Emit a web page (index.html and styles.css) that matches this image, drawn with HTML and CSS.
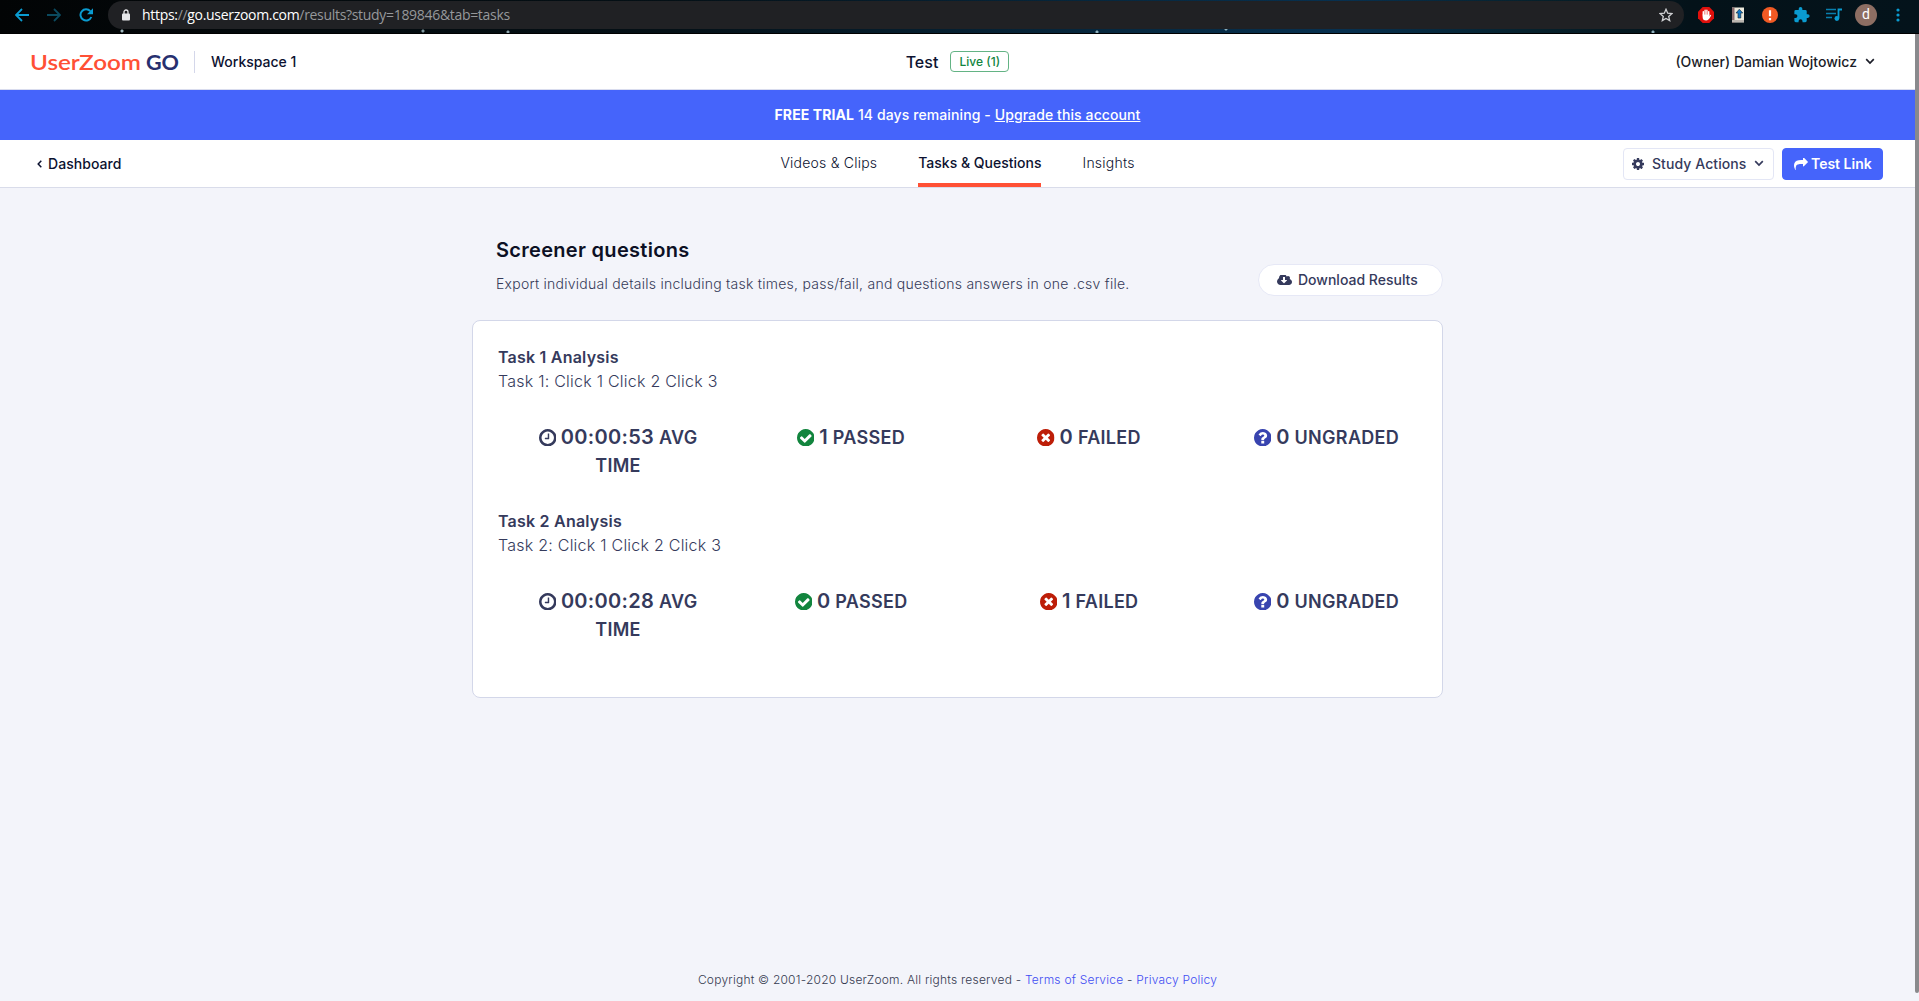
FILE: index.html
```html
<!DOCTYPE html>
<html lang="en">
<head>
<meta charset="utf-8">
<title>UserZoom GO - Tasks &amp; Questions</title>
<link rel="stylesheet" href="styles.css">
</head>
<body>
<svg class="sprite" aria-hidden="true">
  <symbol id="clock" viewBox="128 128 1536 1536"><path d="M1024 544v448q0 14-9 23t-23 9h-320q-14 0-23-9t-9-23v-64q0-14 9-23t23-9h224v-352q0-14 9-23t23-9h64q14 0 23 9t9 23zm416 352q0-148-73-273t-198-198-273-73-273 73-198 198-73 273 73 273 198 198 273 73 273-73 198-198 73-273zm224 0q0 209-103 385.5t-279.5 279.5-385.5 103-385.5-103-279.5-279.5-103-385.5 103-385.5 279.5-279.5 385.5-103 385.5 103 279.5 279.5 103 385.5z"/></symbol>
  <symbol id="check" viewBox="128 128 1536 1536"><path d="M1412 734q0-28-18-46l-91-90q-19-19-45-19t-45 19l-408 407-226-226q-19-19-45-19t-45 19l-91 90q-18 18-18 46 0 27 18 45l362 362q19 19 45 19 27 0 46-19l543-543q18-18 18-45zm252 162q0 209-103 385.5t-279.5 279.5-385.5 103-385.5-103-279.5-279.5-103-385.5 103-385.5 279.5-279.5 385.5-103 385.5 103 279.5 279.5 103 385.5z"/></symbol>
  <symbol id="times" viewBox="128 128 1536 1536"><path d="M1277 1122q0-26-19-45l-181-181 181-181q19-19 19-45 0-27-19-46l-90-90q-19-18-46-18-26 0-45 18l-181 181-181-181q-19-18-45-18-27 0-46 18l-90 90q-19 19-19 46 0 26 19 45l181 181-181 181q-19 19-19 45 0 27 19 46l90 90q19 18 46 18 26 0 45-18l181-181 181 181q19 18 45 18 27 0 46-18l90-90q19-19 19-46zm387-226q0 209-103 385.5t-279.5 279.5-385.5 103-385.5-103-279.5-279.5-103-385.5 103-385.5 279.5-279.5 385.5-103 385.5 103 279.5 279.5 103 385.5z"/></symbol>
  <symbol id="question" viewBox="128 128 1536 1536"><path d="M1024 1376v-192q0-14-9-23t-23-9h-192q-14 0-23 9t-9 23v192q0 14 9 23t23 9h192q14 0 23-9t9-23zm256-672q0-88-55.5-163t-138.5-116-170-41q-243 0-371 213-15 24 8 42l132 100q7 6 19 6 16 0 25-12 53-68 86-92 34-24 86-24 48 0 85.5 26t37.5 59q0 38-20 61t-68 45q-63 28-115.5 86.5t-52.5 125.5v36q0 14 9 23t23 9h192q14 0 23-9t9-23q0-19 21.5-49.5t54.5-49.5q32-18 49-28.5t46-35 44.5-48 28-60.5 12.5-81zm384 192q0 209-103 385.5t-279.5 279.5-385.5 103-385.5-103-279.5-279.5-103-385.5 103-385.5 279.5-279.5 385.5-103 385.5 103 279.5 279.5 103 385.5z"/></symbol>
  <symbol id="chevron" viewBox="0 0 10 7"><path d="M1.2 1.2 5 5l3.800-3.800" fill="none" stroke="currentColor" stroke-width="1.700"/></symbol>
</svg>

<div class="browser">
  <svg class="b-icon back" viewBox="0 0 14 14"><path d="M14 7H1.500M7 1 1 7l6 6" fill="none" stroke="#0a9bd0" stroke-width="1.800"/></svg>
  <svg class="b-icon forward" viewBox="0 0 14 14"><path d="M0 7h12.500M7 1l6 6-6 6" fill="none" stroke="#0b4a5f" stroke-width="1.800"/></svg>
  <svg class="b-icon reload" viewBox="0 0 14 14"><path d="M11.300 3.200A5.600 5.600 0 1 0 12.300 9" fill="none" stroke="#0a9bd0" stroke-width="2"/><path d="M14 .3v6H8z" fill="#0a9bd0"/></svg>
  <div class="omnibox">
    <svg class="lock" viewBox="0 0 8 12"><path d="M2 5V3a2 2 0 0 1 4 0v2" fill="none" stroke="#e6e7e9" stroke-width="1.300"/><rect y="4.500" width="8" height="7" rx="1" fill="#e6e7e9"/></svg>
    <span class="url"><b>https:</b>//<b>go.userzoom.com</b>/results?study=189846&amp;tab=tasks</span>
    <svg class="star" viewBox="0 0 14 14"><path d="m7 1.300 1.700 3.900 4.200.4-3.200 2.800 1 4.200L7 10.400l-3.700 2.200 1-4.200L1.100 5.600l4.200-.4z" fill="none" stroke="#cfd0d2" stroke-width="1.300"/></svg>
  </div>
  <div class="extensions">
    <svg viewBox="0 0 16 16"><path d="M4.700 0h6.600L16 4.700v6.600L11.300 16H4.700L0 11.300V4.700z" fill="#e0100c"/><path d="M5.300 8V4.600M7.100 7.500V3.200M8.900 7.500V3.200M10.700 8V4.600M10.600 11.500l1.900-3" stroke="#fff" stroke-width="1.400" stroke-linecap="round"/><path d="M4.600 7.500h6.800v2.500q-.8 3.500-3.200 3.500-3.600 0-3.600-3.500z" fill="#fff"/></svg>
    <svg viewBox="0 0 16 16"><path d="M2 .5h12v15H2z" fill="#ece9dc"/><path d="M2 .5h2.500v15H2z" fill="#8b6b6d"/><path d="M2 13h12v2H2z" fill="#bbb6b0"/><path d="M9.300 2.200 12.800 6h-2v5H8V6H6z" fill="#1679c5" stroke="#123" stroke-width=".6"/></svg>
    <svg viewBox="0 0 16 16"><circle cx="8" cy="8" r="8" fill="#f15a24"/><path d="M8 3.200v6M8 11v2.200" stroke="#fff" stroke-width="2.200"/></svg>
    <svg viewBox="1.500 1 22 22"><path d="M20.500 11H19V7a2 2 0 0 0-2-2h-4V3.500a2.500 2.500 0 0 0-5 0V5H4a2 2 0 0 0-2 2v3.800h1.500a2.700 2.700 0 0 1 0 5.400H2V20c0 1.100.9 2 2 2h3.800v-1.500a2.700 2.700 0 0 1 5.400 0V22H17a2 2 0 0 0 2-2v-4h1.500a2.500 2.500 0 0 0 0-5z" fill="#0a9bd0"/></svg>
    <svg viewBox="0 0 16 16"><path d="M0 2.500h10M0 6.500h10M0 10.500h6" stroke="#087fae" stroke-width="1.700"/><path d="M12.500 11V2.500H16" fill="none" stroke="#0a9bd0" stroke-width="1.800"/><circle cx="10.900" cy="11.500" r="2.400" fill="#0a9bd0"/></svg>
    <span class="avatar">d</span>
    <svg class="dots" viewBox="0 0 4 14"><g fill="#0a9bd0"><circle cx="2" cy="2" r="1.600"/><circle cx="2" cy="7" r="1.600"/><circle cx="2" cy="12" r="1.600"/></g></svg>
  </div>
</div>

<div class="page">
  <header class="top">
    <div class="brand">
      <svg class="logo" viewBox="0 0 150 24"><text x="-1" y="20" textLength="111" lengthAdjust="spacingAndGlyphs" fill="#ff5035">UserZoom</text><text class="go" x="115" y="20" textLength="33" lengthAdjust="spacingAndGlyphs" fill="#27306f">GO</text></svg>
      <span class="workspace">Workspace 1</span>
    </div>
    <div class="study"><span class="study-name">Test</span><span class="live">Live (1)</span></div>
    <div class="owner"><span>(Owner) Damian Wojtowicz</span><svg class="chev"><use href="#chevron"/></svg></div>
  </header>
  <div class="trial"><span><b>FREE TRIAL</b> 14 days remaining - <a href="#">Upgrade this account</a></span></div>
  <nav class="subnav">
    <a class="dash" href="#"><svg viewBox="0 0 5 8"><path d="M4.300.8 1.200 4l3.100 3.200" fill="none" stroke="currentColor" stroke-width="1.500"/></svg><span>Dashboard</span></a>
    <div class="tabs"><a class="tab" href="#">Videos &amp; Clips</a><a class="tab active" href="#">Tasks &amp; Questions</a><a class="tab" href="#">Insights</a></div>
    <div class="actions">
      <button class="btn study-actions"><svg class="cog" viewBox="128 128 1536 1536"><path fill="currentColor" d="M1152 896q0-106-75-181t-181-75-181 75-75 181 75 181 181 75 181-75 75-181zm512-109v222q0 12-8 23t-20 13l-185 28q-19 54-39 91 35 50 107 138 10 12 10 25t-9 23q-27 37-99 108t-94 71q-12 0-26-9l-138-108q-44 23-91 38-16 136-29 186-7 28-36 28h-222q-14 0-24.500-8.500t-11.500-21.500l-28-184q-49-16-90-37l-141 107q-10 9-25 9-14 0-25-11-126-114-165-168-7-10-7-23 0-12 8-23 15-21 51-66.500t54-70.500q-27-50-41-99l-183-27q-13-2-21-12.500t-8-23.500v-222q0-12 8-23t19-13l186-28q14-46 39-92-40-57-107-138-10-12-10-24 0-10 9-23 26-36 98.500-107.500t94.500-71.500q13 0 26 10l138 107q44-23 91-38 16-136 29-186 7-28 36-28h222q14 0 24.500 8.500t11.500 21.500l28 184q49 16 90 37l142-107q9-9 24-9 13 0 25 10 129 119 165 170 7 8 7 22 0 12-8 23-15 21-51 66.500t-54 70.500q26 50 41 98l183 28q13 2 21 12.500t8 23.500z"/></svg><span>Study Actions</span><svg class="chev"><use href="#chevron"/></svg></button>
      <button class="btn test-link"><svg class="share" viewBox="0 128 1792 1536"><path fill="currentColor" d="M1792 640q0 26-19 45l-512 512q-19 19-45 19t-45-19-19-45v-256h-224q-98 0-175.500 6t-154 21.500-133 42.500-105.500 69.500-80 101-48.500 138.500-17.500 181q0 55 5 123 0 6 2.500 23.500t2.500 26.500q0 15-8.500 25t-23.500 10q-16 0-28-17-7-9-13-22t-13.500-30-10.500-24q-127-285-127-451 0-199 53-333 162-403 875-403h224v-256q0-26 19-45t45-19 45 19l512 512q19 19 19 45z"/></svg><span>Test Link</span></button>
    </div>
  </nav>

  <main class="content">
    <div class="intro">
      <div><h1>Screener questions</h1><p>Export individual details including task times, pass/fail, and questions answers in one .csv file.</p></div>
      <button class="download"><svg viewBox="0 256 1920 1280"><path fill="currentColor" d="M1280 928q0-14-9-23t-23-9h-224v-352q0-13-9.500-22.500t-22.500-9.500h-192q-13 0-22.500 9.500t-9.500 22.500v352h-224q-13 0-22.500 9.500t-9.500 22.500q0 14 9 23l352 352q9 9 23 9t23-9l351-351q10-12 10-24zm640 224q0 159-112.500 271.500t-271.500 112.500h-1088q-185 0-316.500-131.500t-131.500-316.500q0-130 70-240t188-165q-2-30-2-43 0-212 150-362t362-150q156 0 285.500 87t188.500 231q71-62 166-62 106 0 181 75t75 181q0 76-41 138 130 31 213.500 135.500t83.500 238.500z"/></svg><span>Download Results</span></button>
    </div>
    <section class="card">
      <article class="task">
        <h2>Task 1 Analysis</h2>
        <p>Task 1: Click 1 Click 2 Click 3</p>
        <div class="stats">
          <div class="stat avg"><svg class="clock"><use href="#clock"/></svg> <b>00:00:53</b> <span>AVG</span> <span>TIME</span></div>
          <div class="stat"><svg class="passed"><use href="#check"/></svg> <b>1</b> PASSED</div>
          <div class="stat"><svg class="failed"><use href="#times"/></svg> <b>0</b> FAILED</div>
          <div class="stat"><svg class="ungraded"><use href="#question"/></svg> <b>0</b> UNGRADED</div>
        </div>
      </article>
      <article class="task">
        <h2>Task 2 Analysis</h2>
        <p>Task 2: Click 1 Click 2 Click 3</p>
        <div class="stats">
          <div class="stat avg"><svg class="clock"><use href="#clock"/></svg> <b>00:00:28</b> <span>AVG</span> <span>TIME</span></div>
          <div class="stat"><svg class="passed"><use href="#check"/></svg> <b>0</b> PASSED</div>
          <div class="stat"><svg class="failed"><use href="#times"/></svg> <b>1</b> FAILED</div>
          <div class="stat"><svg class="ungraded"><use href="#question"/></svg> <b>0</b> UNGRADED</div>
        </div>
      </article>
    </section>
  </main>
  <footer><span>Copyright © 2001-2020 UserZoom. All rights reserved - <a href="#">Terms of Service</a> - <a href="#">Privacy Policy</a></span></footer>
  <div class="scrollbar"></div>
</div>
</body>
</html>
```
FILE: styles.css
```css
* { box-sizing: border-box; }
body { margin: 0; width: 1919px; height: 1001px; overflow: hidden; display: flex; flex-direction: column; background: #f3f4fa; color: #0c1230; font-family: Inter, sans-serif; font-size: 14px; }
a { color: inherit; text-decoration: none; }
h1, h2, p { margin: 0; }
button { font: inherit; }
svg { flex: none; }
.sprite { position: absolute; width: 0; height: 0; }

.browser { height: 34px; flex: none; display: flex; align-items: flex-start; background: radial-gradient(circle at 122px 31px, #9fb6bd 1px, transparent 2px), radial-gradient(circle at 423px 31px, #7f969d 1px, transparent 2px), radial-gradient(circle at 508px 32px, #8fa6ad 1px, transparent 2px), radial-gradient(circle at 1097px 32px, #8fb0bd 1px, transparent 2px), radial-gradient(circle at 1226px 29px, #8fb0bd 1px, transparent 2px), radial-gradient(circle at 1653px 32px, #8fb0bd 1px, transparent 2px), linear-gradient(90deg, #020405, #041016 35%, #06283f 58%, #07304f 70%, #06212c 80%, #041219 88%, #04131b); border-bottom: 1px solid #000; }
.b-icon { width: 14px; height: 14px; margin-top: 8px; }
.back { margin-left: 15px; }
.forward { margin-left: 18px; }
.reload { margin-left: 18px; }
.omnibox { margin: 1px 0 0 15px; width: 1576px; height: 28px; border-radius: 14px; background: #202124; display: flex; align-items: center; padding: 0 11px 0 14px; }
.lock { width: 8px; height: 12px; }
.url { margin-left: 12px; flex: 1; font: 14px/20px "Open Sans", sans-serif; letter-spacing: -.31px; color: #96989b; }
.url b { font-weight: 400; color: #fff; }
.star { width: 14px; height: 14px; }
.extensions { display: flex; align-items: center; height: 30px; margin-left: 14px; gap: 16px; }
.extensions svg { width: 16px; height: 16px; }
.extensions .dots { width: 4px; height: 14px; margin-left: 3px; }
.avatar { width: 22px; height: 22px; margin-left: -3px; border-radius: 50%; background: #8d6e63; color: #fff; font: 14px/21px Roboto, sans-serif; text-align: center; }

.page { position: relative; flex: 1; display: flex; flex-direction: column; width: 1919px; padding-right: 4px; }
.scrollbar { position: absolute; right: 0; top: 0; width: 4px; height: 959px; background: #89898c; border-radius: 0 0 2px 2px; }
.top, .subnav { display: grid; grid-template-columns: 1fr auto 1fr; align-items: center; background: #fff; }
.top { height: 56px; border-bottom: 1px solid #d9dcee; }
.brand { display: flex; align-items: center; padding-left: 31px; }
.logo { width: 150px; height: 24px; overflow: visible; font: 600 21px Lato, sans-serif; }
.logo .go { font-weight: 700; }
.workspace { margin-left: 13px; padding-left: 16px; border-left: 1px solid #d4d7ea; line-height: 22px; font-weight: 500; font-size: 14px; }
.study { display: flex; align-items: center; }
.study-name { font-size: 16px; font-weight: 500; }
.live { margin-left: 12px; width: 59px; height: 21px; border: 1px solid #63b384; border-radius: 4px; color: #12853e; font-size: 12px; font-weight: 500; line-height: 19px; text-align: center; }
.owner { display: flex; align-items: center; justify-content: flex-end; padding-right: 40px; font-weight: 500; color: #1b1d28; }
.chev { width: 10px; height: 7px; margin-left: 8px; }
.trial { height: 50px; display: flex; align-items: center; justify-content: center; padding-bottom: 1px; background: #4564fb; color: #fff; font-weight: 500; letter-spacing: .1px; }
.trial a { text-decoration: underline; }
.subnav { height: 48px; border-bottom: 1px solid #d9dcea; }
.dash { display: flex; align-items: center; padding-left: 37px; font-weight: 500; letter-spacing: .05px; }
.dash svg { width: 5px; height: 8px; margin-right: 6px; }
.tabs { display: flex; align-self: stretch; gap: 41px; }
.tab { display: flex; align-items: center; border-bottom: 4px solid transparent; padding-top: 2px; font-weight: 300; letter-spacing: .22px; }
.active { font-weight: 500; letter-spacing: 0; border-color: #ff5035; }
.actions { display: flex; justify-content: flex-end; padding-right: 32px; gap: 8px; }
.btn { height: 32px; display: flex; align-items: center; border-radius: 4px; border: 1px solid #e3e6f5; background: #fff; color: #353a5c; font-weight: 500; padding: 0; }
.study-actions { width: 151px; padding-left: 8px; letter-spacing: .08px; }
.cog { width: 12px; height: 12px; margin-right: 8px; }
.test-link { width: 101px; background: #4564fb; border-color: #4564fb; color: #fff; font-weight: 600; padding-left: 11px; }
.share { width: 14px; height: 12px; margin-right: 3px; }

.content { width: 971px; margin: 49px 0 0 472px; }
.intro { display: flex; justify-content: space-between; padding-left: 24px; height: 83px; }
h1 { font-size: 20px; line-height: 26px; font-weight: 600; color: #0c1024; letter-spacing: .3px; }
.intro p { font-size: 14px; line-height: 20px; margin-top: 11px; color: #353a58; font-weight: 300; letter-spacing: .25px; white-space: nowrap; }
.download { width: 185px; height: 32px; margin-top: 27px; display: flex; align-items: center; padding: 0 0 1px 18px; border: 1px solid #e6e8f6; border-radius: 16px; background: #fff; color: #353a5c; font-weight: 500; }
.download svg { width: 15px; height: 10px; margin-right: 6px; }
.card { height: 378px; border: 1px solid #d3d7e9; border-radius: 8px; background: #fff; color: #353a5c; padding: 24px 0 0 25px; }
.task { height: 164px; }
h2 { font-size: 16px; line-height: 24px; font-weight: 600; letter-spacing: .22px; }
.task p { font-size: 16px; line-height: 24px; font-weight: 300; letter-spacing: .24px; }
.stats { display: grid; grid-template-columns: 236px 230px 246px 229px; margin-top: 30px; margin-left: 2px; }
.stat { font-size: 18px; line-height: 28px; font-weight: 600; letter-spacing: .3px; text-align: center; }
.avg { padding: 0 20px; }
.stat b { font-size: 20px; font-weight: 600; }
.stat svg { width: 17.500px; height: 17.500px; vertical-align: -2px; fill: currentColor; }
.passed { color: #12853e; }
.failed { color: #bd1e08; }
.ungraded { color: #3844af; }
footer { margin-top: auto; padding-bottom: 12px; text-align: center; font-size: 12px; line-height: 18px; color: #353a50; font-weight: 300; letter-spacing: .22px; }
footer a { color: #3f4df2; }
```
